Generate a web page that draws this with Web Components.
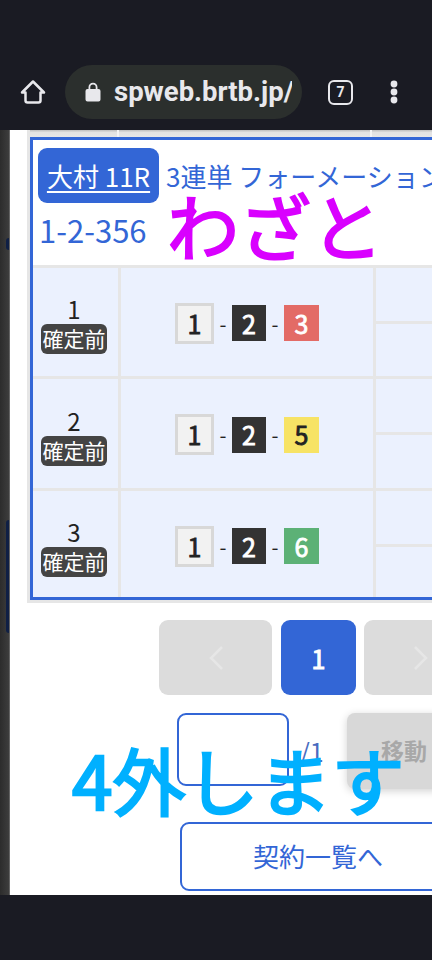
<!DOCTYPE html>
<html lang="ja">
<head>
<meta charset="utf-8">
<title>契約一覧</title>
<style>
  html, body { margin: 0; height: 960px; overflow: hidden; background: #1a1b23; }
  body { font-family: "Noto Sans CJK JP", "Noto Sans", sans-serif; display: flex; flex-direction: column; }
</style>
</head>
<body>
<browser-bar url="spweb.brtb.jp/" tabs="7"></browser-bar>
<page-area>
  <race-table>
    <bet-row no="1" third="3" tone="red" height="111" top="26" nudge="2"></bet-row>
    <bet-row no="2" third="5" tone="yellow" height="112" top="27" nudge="2"></bet-row>
    <bet-row no="3" third="6" tone="green" height="106" top="26" nudge="4" last></bet-row>
  </race-table>
  <page-nav></page-nav>
</page-area>

<script>
class BrowserBar extends HTMLElement {
  constructor() {
    super();
    this.attachShadow({ mode: "open" });
  }
  connectedCallback() {
    this.shadowRoot.innerHTML = `
      <style>
        :host { display: flex; flex: none; box-sizing: border-box; height: 130px; padding: 65px 0 11px 19px; align-items: center; background: #1a1b23; color: #e8e8ec; }
        .home { width: 28px; height: 28px; flex: none; margin-top: -1px; }
        .pill { box-sizing: border-box; width: 237px; height: 54px; margin-left: 18px; padding: 0 10px 0 20px; display: flex; align-items: center; background: #2b2f2d; border-radius: 27px; overflow: hidden; flex: none; }
        .lock { width: 16px; height: 20px; flex: none; margin-right: 13px; }
        .url { font: 700 27.5px/54px Roboto, sans-serif; white-space: nowrap; overflow: hidden; }
        .tabs { box-sizing: border-box; width: 25px; height: 25px; margin-left: 26px; border: 2.5px solid #e8e8ec; border-radius: 6px; font: 700 14px/20px Roboto, sans-serif; text-align: center; flex: none; }
        .more { width: 8px; height: 24px; margin-left: 37px; flex: none; }
      </style>
      <svg class="home" viewBox="0 0 28 28" fill="none" stroke="#e8e8ec" stroke-width="2.5" stroke-linejoin="round"><path d="M3 14.5 14 3.5l11 11h-3.5v8a2 2 0 0 1-2 2h-11a2 2 0 0 1-2-2v-8z"/></svg>
      <div class="pill">
        <svg class="lock" viewBox="0 0 16 20"><path fill="#e8e8ec" d="M3.5 7V5.2a4.5 4.5 0 0 1 9 0V7h1a2 2 0 0 1 2 2v8.500a2 2 0 0 1-2 2h-11a2 2 0 0 1-2-2V9a2 2 0 0 1 2-2zM5.300 7h5.400V5.200a2.700 2.700 0 0 0-5.400 0z"/></svg>
        <span class="url">${this.getAttribute("url")}</span>
      </div>
      <div class="tabs">${this.getAttribute("tabs")}</div>
      <svg class="more" viewBox="0 0 8 24" fill="#e8e8ec"><circle cx="4" cy="4" r="3.400"/><circle cx="4" cy="12" r="3.400"/><circle cx="4" cy="20" r="3.400"/></svg>
    `;
  }
}

class PageArea extends HTMLElement {
  constructor() {
    super();
    this.attachShadow({ mode: "open" });
  }
  connectedCallback() {
    this.shadowRoot.innerHTML = `
      <style>
        :host { display: flex; flex: none; height: 765px; position: relative; overflow: hidden; }
        .edge { width: 10px; flex: none; display: flex; flex-direction: column; background: linear-gradient(90deg, #2c2c2c, #3c3c3c 85%, #777); }
        .edge i { display: block; margin-left: 6px; width: 3px; background: #0f1f44; border-radius: 3px 0 0 3px; }
        .page { flex: 1; min-width: 0; background: #fff; padding: 0 0 0 17px; overflow: hidden; }
      </style>
      <div class="edge">
        <span style="height:108px"></span><i style="height:12px"></i>
        <span style="height:270px"></span><i style="height:113px"></i>
      </div>
      <div class="page"><slot></slot></div>
    `;
  }
}

class RaceTable extends HTMLElement {
  constructor() {
    super();
    this.attachShadow({ mode: "open" });
  }
  connectedCallback() {
    this.shadowRoot.innerHTML = `
      <style>
        :host { display: block; box-sizing: border-box; width: 560px; border: solid #e6e6e6; border-width: 0 3px 3px; color: #3366d6; }
        .rule { height: 7px; background: linear-gradient(#bdbdbd, #e2e2e2 35%, #e6e6e6); position: relative; }
        .rule i { position: absolute; top: 0; width: 2px; height: 7px; background: #f4f4f4; }
        .frame { border: 3px solid #3366d6; background: #fff; }
        .head { box-sizing: border-box; height: 128px; padding: 8px 0 0 5px; border-bottom: 3px solid #e6e6e6; position: relative; }
        .top { display: flex; align-items: center; height: 55px; white-space: nowrap; }
        .venue { box-sizing: border-box; width: 121px; height: 55px; background: #3366d6; color: #fff; border-radius: 9px; text-align: center; font-size: 26px; line-height: 55px; text-decoration: underline; text-decoration-thickness: 2px; text-underline-offset: 4px; flex: none; }
        .kind { font-size: 26px; margin-left: 7px; line-height: 55px; }
        .combo { font-size: 31px; line-height: 38px; margin: 8px 0 0 1px; }
        .note { position: absolute; left: 134px; top: 44px; font-size: 72px; line-height: 80px; -webkit-text-stroke: 2px #d900ff; color: #d900ff; white-space: nowrap; }
      </style>
      <div class="rule"><i style="left:87px"></i><i style="left:340px"></i></div>
      <div class="frame">
        <div class="head">
          <div class="top"><span class="venue">大村 11R</span><span class="kind">3連単 フォーメーション</span></div>
          <div class="combo">1-2-356</div>
          <span class="note">わざと</span>
        </div>
        <slot></slot>
      </div>
    `;
  }
}

class BetRow extends HTMLElement {
  constructor() {
    super();
    this.attachShadow({ mode: "open" });
  }
  connectedCallback() {
    const last = this.hasAttribute("last");
    this.shadowRoot.innerHTML = `
      <style>
        :host { display: grid; grid-template-columns: 85px 3px 252px 3px 1fr; height: ${this.getAttribute("height")}px; background: #ebf1fe; box-sizing: border-box; ${last ? "" : "border-bottom: 3px solid #e6e6e6;"} }
        .line { background: #e6e6e6; }
        .no { display: flex; flex-direction: column; align-items: center; padding: ${this.getAttribute("top")}px 3px 0 0; color: #222; font-size: 24px; line-height: 30px; }
        .state { box-sizing: border-box; width: 66px; height: 30px; background: #444; color: #fff; border-radius: 6px; font-size: 21px; line-height: 29px; text-align: center; white-space: nowrap; }
        .combo { display: flex; align-items: center; justify-content: center; padding-top: ${this.getAttribute("nudge")}px; }
        .dash { width: 18px; text-align: center; color: #222; font-size: 20px; }
        .sub { display: flex; flex-direction: column; }
        .sub div:first-child { flex: none; height: 53px; }
        .sub div + div { flex: 1; border-top: 3px solid #e6e6e6; }
      </style>
      <div class="no">${this.getAttribute("no")}<span class="state">確定前</span></div>
      <div class="line"></div>
      <div class="combo">
        <boat-num tone="white">1</boat-num><span class="dash">-</span>
        <boat-num tone="black">2</boat-num><span class="dash">-</span>
        <boat-num tone="${this.getAttribute("tone")}">${this.getAttribute("third")}</boat-num>
      </div>
      <div class="line"></div>
      <div class="sub"><div></div><div></div></div>
    `;
  }
}

class BoatNum extends HTMLElement {
  constructor() {
    super();
    this.attachShadow({ mode: "open" });
  }
  connectedCallback() {
    const tones = {
      white: "#f2f2f2;color:#222;border:3px solid #d8d8d8;width:39px;height:41px",
      black: "#333;color:#fff;width:34px;height:36px",
      red: "#e36b66;color:#fff;width:35px;height:36px",
      yellow: "#f7e365;color:#222;width:35px;height:36px",
      green: "#5cb176;color:#fff;width:35px;height:36px"
    };
    this.shadowRoot.innerHTML = `
      <style>
        :host { display: flex; flex: none; align-items: center; justify-content: center; box-sizing: border-box; font-size: 25px; line-height: 1; -webkit-text-stroke: 0.8px currentColor; background: ${tones[this.getAttribute("tone")]}; }
      </style>
      <slot></slot>
    `;
  }
}

class PageNav extends HTMLElement {
  constructor() {
    super();
    this.attachShadow({ mode: "open" });
  }
  connectedCallback() {
    this.shadowRoot.innerHTML = `
      <style>
        :host { display: block; width: 560px; color: #3366d6; }
        .pages { display: flex; margin: 17px 0 0 132px; height: 75px; }
        .pages > div { box-sizing: border-box; height: 75px; border-radius: 9px; background: #dcdcdc; display: flex; align-items: center; justify-content: center; flex: none; }
        .arrow { width: 113px; }
        .arrow svg { width: 16px; height: 26px; }
        .pages .cur { width: 75px; margin: 0 8px 0 9px; background: #3366d6; color: #fff; font-size: 25px; -webkit-text-stroke: 1px #fff; }
        .go { display: flex; margin: 18px 0 0 150px; height: 77px; align-items: flex-start; }
        .box { box-sizing: border-box; width: 112px; height: 73px; border: 2.5px solid #3366d6; border-radius: 9px; flex: none; }
        .total { margin: 20px 0 0 11px; width: 47px; font-size: 25px; line-height: 36px; color: #4a6bc0; flex: none; }
        .move { box-sizing: border-box; width: 110px; height: 76px; border-radius: 8px; background: #d8d8d8; color: #a8a8a8; font-size: 23px; font-weight: 700; line-height: 74px; padding-left: 34px; box-shadow: 0 2px 8px rgba(0,0,0,.18); flex: none; white-space: nowrap; }
        .list { box-sizing: border-box; display: block; margin: 32px 0 0 153px; width: 276px; height: 69px; border: 2.5px solid #3366d6; border-radius: 9px; text-align: center; font-size: 26px; line-height: 64px; }
        .note { position: absolute; left: 72px; top: 603px; font-size: 73px; line-height: 90px; -webkit-text-stroke: 2.4px #00b0ff; color: #00b0ff; white-space: nowrap; }
      </style>
      <div class="pages">
        <div class="arrow"><svg viewBox="0 0 16 26" fill="none" stroke="#e6e6e6" stroke-width="2.500"><path d="M14 2 3 13l11 11"/></svg></div>
        <div class="cur">1</div>
        <div class="arrow"><svg viewBox="0 0 16 26" fill="none" stroke="#e6e6e6" stroke-width="2.500"><path d="m2 2 11 11L2 24"/></svg></div>
      </div>
      <div class="go">
        <div class="box"></div>
        <span class="total">/1</span>
        <div class="move">移動</div>
      </div>
      <div class="list">契約一覧へ</div>
      <span class="note">4外します</span>
    `;
  }
}

customElements.define("browser-bar", BrowserBar);
customElements.define("page-area", PageArea);
customElements.define("race-table", RaceTable);
customElements.define("bet-row", BetRow);
customElements.define("boat-num", BoatNum);
customElements.define("page-nav", PageNav);
</script>
</body>
</html>
